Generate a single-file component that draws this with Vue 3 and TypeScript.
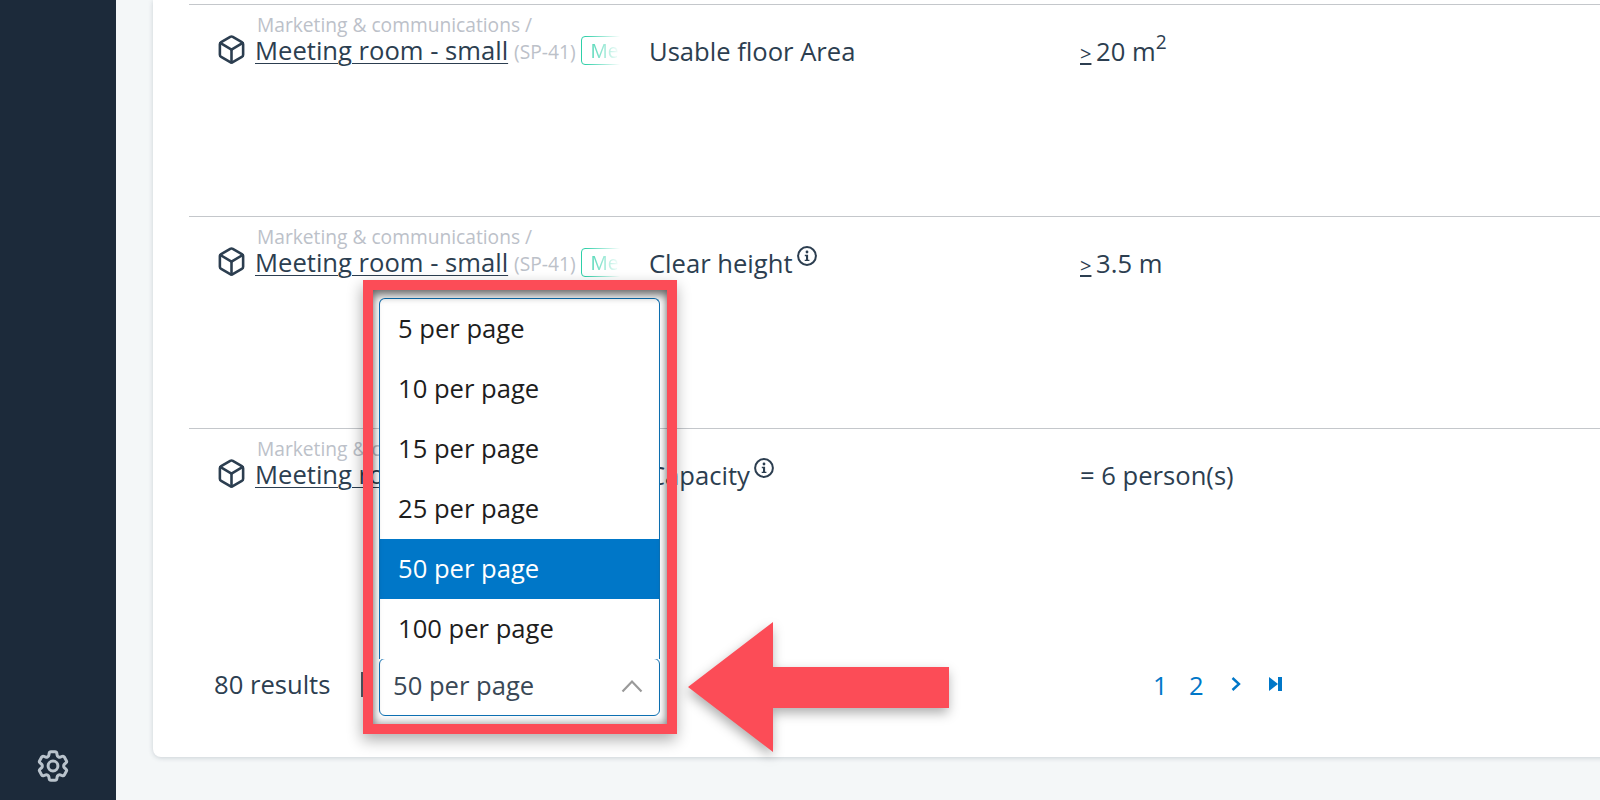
<script setup lang="ts">
interface Row {
  requirement: string
  prefix: string
  value: string
  sup?: string
  info: boolean
}

const rows: Row[] = [
  { requirement: 'Usable floor Area', prefix: '≥', value: '20 m', sup: '2', info: false },
  { requirement: 'Clear height', prefix: '≥', value: '3.5 m', info: true },
  { requirement: 'Capacity', prefix: '=', value: '6 person(s)', info: true }
]

const options: number[] = [5, 10, 15, 25, 50, 100]
const selected = 50
</script>

<template>
  <div class="page">
    <aside class="sidebar">
      <svg class="gear" viewBox="0 0 24 24" fill="none" stroke="currentColor" stroke-width="1.9" stroke-linecap="round" stroke-linejoin="round">
        <path d="M9.594 3.94c.09-.542.56-.94 1.11-.94h2.593c.55 0 1.02.398 1.11.94l.213 1.281c.063.374.313.686.645.87.074.04.147.083.22.127.325.196.72.257 1.075.124l1.217-.456a1.125 1.125 0 0 1 1.37.49l1.296 2.247a1.125 1.125 0 0 1-.26 1.431l-1.003.827c-.293.241-.438.613-.43.992a7.723 7.723 0 0 1 0 .255c-.008.378.137.75.43.991l1.004.827c.424.35.534.955.26 1.43l-1.298 2.247a1.125 1.125 0 0 1-1.369.491l-1.217-.456c-.355-.133-.75-.072-1.076.124a6.47 6.47 0 0 1-.22.128c-.331.183-.581.495-.644.869l-.213 1.281c-.09.543-.56.94-1.11.94h-2.594c-.55 0-1.019-.398-1.11-.94l-.213-1.281c-.062-.374-.312-.686-.644-.87a6.52 6.52 0 0 1-.22-.127c-.325-.196-.72-.257-1.076-.124l-1.217.456a1.125 1.125 0 0 1-1.369-.49l-1.297-2.247a1.125 1.125 0 0 1 .26-1.431l1.004-.827c.292-.24.437-.613.43-.991a6.932 6.932 0 0 1 0-.255c.007-.38-.138-.751-.43-.992l-1.004-.827a1.125 1.125 0 0 1-.26-1.43l1.297-2.247a1.125 1.125 0 0 1 1.37-.491l1.216.456c.356.133.751.072 1.076-.124.072-.044.146-.086.22-.128.332-.183.582-.495.644-.869l.214-1.28Z" />
        <circle cx="12" cy="12" r="3.1" />
      </svg>
    </aside>

    <main class="main">
      <section class="card">
        <div v-for="row in rows" :key="row.requirement" class="row">
          <div class="space">
            <svg class="cube" viewBox="0 0 24 24" fill="none" stroke="currentColor" stroke-width="2" stroke-linecap="round" stroke-linejoin="round">
              <path d="M21 16V8a2 2 0 0 0-1-1.73l-7-4a2 2 0 0 0-2 0l-7 4A2 2 0 0 0 3 8v8a2 2 0 0 0 1 1.73l7 4a2 2 0 0 0 2 0l7-4A2 2 0 0 0 21 16z" />
              <path d="M3.27 6.96 12 12.01l8.73-5.05" />
              <path d="M12 22.08V12" />
            </svg>
            <div class="space-text">
              <div class="crumb">Marketing &amp; communications /</div>
              <div class="name-line">
                <a class="name">Meeting room - small</a>
                <span class="code">(SP-41)</span>
                <span class="tag-clip"><span class="tag">Meeting</span></span>
              </div>
            </div>
          </div>
          <div class="req">
            <span>{{ row.requirement }}</span>
            <svg v-if="row.info" class="info" viewBox="0 0 20 20">
              <circle cx="10" cy="10" r="8.9" fill="none" stroke="currentColor" stroke-width="2" />
              <circle cx="10" cy="6" r="1.4" fill="currentColor" />
              <path d="M7.8 8.8h3.3v4.9h1.3v1.4H7.7v-1.4h1.3V10.2H7.8z" fill="currentColor" />
            </svg>
          </div>
          <div class="val">
            <u v-if="row.prefix === '≥'" class="gte">&gt;</u><span v-else>{{ row.prefix }}</span>
            {{ row.value }}<sup v-if="row.sup">{{ row.sup }}</sup>
          </div>
        </div>

        <footer class="footer">
          <span class="count">80 results</span>
          <span class="pipe"></span>
          <div class="select">
            <ul class="menu">
              <li v-for="n in options" :key="n" :class="{ active: n === selected }">{{ n }} per page</li>
            </ul>
            <span class="current">{{ selected }} per page</span>
            <svg class="caret" viewBox="0 0 22 14" fill="none" stroke="currentColor" stroke-width="2.2">
              <path d="M1.5 12.5 11 2.5l9.5 10" />
            </svg>
          </div>
          <nav class="pager">
            <a class="num">1</a>
            <a class="num">2</a>
            <svg class="next" viewBox="0 0 12 16" fill="none" stroke="currentColor" stroke-width="2.4">
              <path d="M2.5 2 9 8l-6.5 6" />
            </svg>
            <svg class="last" viewBox="0 0 14 16" fill="currentColor">
              <path d="M0 1l9 7-9 7z" />
              <rect x="9" y="1" width="4" height="14" />
            </svg>
          </nav>
        </footer>
      </section>
    </main>

    <div class="highlight"></div>
    <svg class="arrow" viewBox="0 0 262 130">
      <polygon points="0,65 85,0 85,45 261,45 261,86 85,86 85,130" fill="#fc4c57" />
    </svg>
  </div>
</template>

<style>
html, body { margin: 0; padding: 0; }
</style>

<style scoped>
.page {
  position: relative;
  display: flex;
  width: 1600px;
  height: 800px;
  overflow: hidden;
  background: #f4f7f8;
  font-family: "Open Sans", sans-serif;
  color: #2c3e50;
}
.sidebar {
  flex: none;
  width: 116px;
  height: 800px;
  box-sizing: border-box;
  background: #1c2a3a;
  color: #b9c3cc;
  display: flex;
  flex-direction: column;
  justify-content: flex-end;
  align-items: center;
  padding: 0 0 15px 0;
}
.gear { width: 38px; height: 38px; margin-right: 11px; }
.main { flex: 1; min-width: 0; padding-left: 37px; }
.card {
  box-sizing: border-box;
  width: 1500px;
  height: 757px;
  padding: 4px 0 0 36px;
  background: #fff;
  border-bottom-left-radius: 8px;
  box-shadow: 0 1px 5px rgba(40, 60, 80, 0.2);
}
.row {
  box-sizing: border-box;
  height: 212px;
  border-top: 1px solid #c4c7cb;
  display: grid;
  grid-template-columns: 460px 430px 1fr;
  font-size: 25.6px;
  line-height: 32px;
}
.space { display: flex; align-items: flex-start; padding: 9px 0 0 27px; min-width: 0; }
.cube { flex: none; width: 31px; height: 31px; margin: 20px 8px 0 0; color: #2c3e50; }
.space-text { min-width: 0; }
.crumb {
  font-size: 19.2px;
  line-height: 24px;
  color: #bcc1c9;
  margin: -1px 0 0 2px;
  white-space: nowrap;
}
.name-line { display: flex; align-items: center; white-space: nowrap; height: 34px; margin-top: -3px; }
.name { text-decoration: underline; text-underline-offset: 3px; text-decoration-thickness: 1px; }
.code { font-size: 19.2px; color: #bcc1c9; margin: 2px 0 0 6px; }
.tag-clip {
  display: block;
  width: 39px;
  height: 29px;
  margin: -2px 0 0 5px;
  overflow: hidden;
  -webkit-mask-image: linear-gradient(to right, #000 10%, transparent 100%);
  mask-image: linear-gradient(to right, #000 10%, transparent 100%);
}
.tag {
  display: block;
  width: 80px;
  box-sizing: border-box;
  height: 29px;
  padding: 0 9px;
  border: 1px solid #2ecfa8;
  border-radius: 4px;
  font-size: 19.2px;
  line-height: 27px;
  color: #2ecfa8;
}
.req { padding-top: 31px; display: flex; align-items: flex-start; }
.info { width: 20px; height: 20px; margin: 0 0 0 4px; color: #2c3e50; position: relative; top: -2px; }
.val { padding: 31px 0 0 1px; }
.gte { font-size: 20px; text-underline-offset: 2px; margin-right: -2px; }
sup { font-size: 19.2px; line-height: 0; position: relative; top: -2px; }
.footer {
  position: relative;
  display: flex;
  align-items: center;
  height: 113px;
  padding: 0 0 16px 25px;
  box-sizing: border-box;
  margin-top: -4px;
  font-size: 25.6px;
}
.count { width: 147px; }
.pipe { width: 2px; height: 25px; background: #555f69; }
.select {
  position: relative;
  box-sizing: border-box;
  display: flex;
  align-items: center;
  justify-content: space-between;
  width: 281px;
  height: 58px;
  margin: 5px 0 0 16px;
  padding: 0 16px 0 13px;
  background: #fff;
  border: 1px solid #0e72b5;
  border-radius: 6px;
  color: #3a4856;
  z-index: 3;
}
.current { position: relative; top: -2px; }
.caret { width: 22px; height: 14px; color: #9a9a9a; position: relative; top: -1px; }
.menu {
  position: absolute;
  left: -1px;
  right: -1px;
  bottom: 100%;
  margin: 0;
  padding: 0;
  list-style: none;
  height: 361px;
  box-sizing: border-box;
  overflow: hidden;
  background: #fff;
  border: 1px solid #0e72b5;
  border-bottom: 0;
  border-radius: 6px 6px 0 0;
  color: #1d1d1d;
}
.menu li {
  height: 60px;
  line-height: 60px;
  padding-left: 18px;
}
.menu li.active { background: #0077c8; color: #fff; }
.pager {
  display: flex;
  align-items: center;
  margin-left: 493px;
  padding-top: 2px;
  color: #0077c8;
}
.num { width: 36px; }
.next { width: 12px; height: 16px; margin: -4px 0 0 5px; }
.last { width: 14px; height: 16px; margin: -4px 0 0 27px; }
.highlight {
  position: absolute;
  left: 363px;
  top: 280px;
  width: 314px;
  height: 454px;
  box-sizing: border-box;
  border: 10px solid #fc4c57;
  box-shadow: -1px 6px 14px rgba(0, 0, 0, 0.32), inset 0 8px 8px -2px rgba(0, 0, 0, 0.4), inset 0 0 9px 1px rgba(0, 0, 0, 0.38);
  z-index: 5;
}
.arrow {
  position: absolute;
  left: 688px;
  top: 622px;
  width: 262px;
  height: 130px;
  z-index: 5;
  filter: drop-shadow(-1px 5px 6px rgba(0, 0, 0, 0.32));
}
</style>
